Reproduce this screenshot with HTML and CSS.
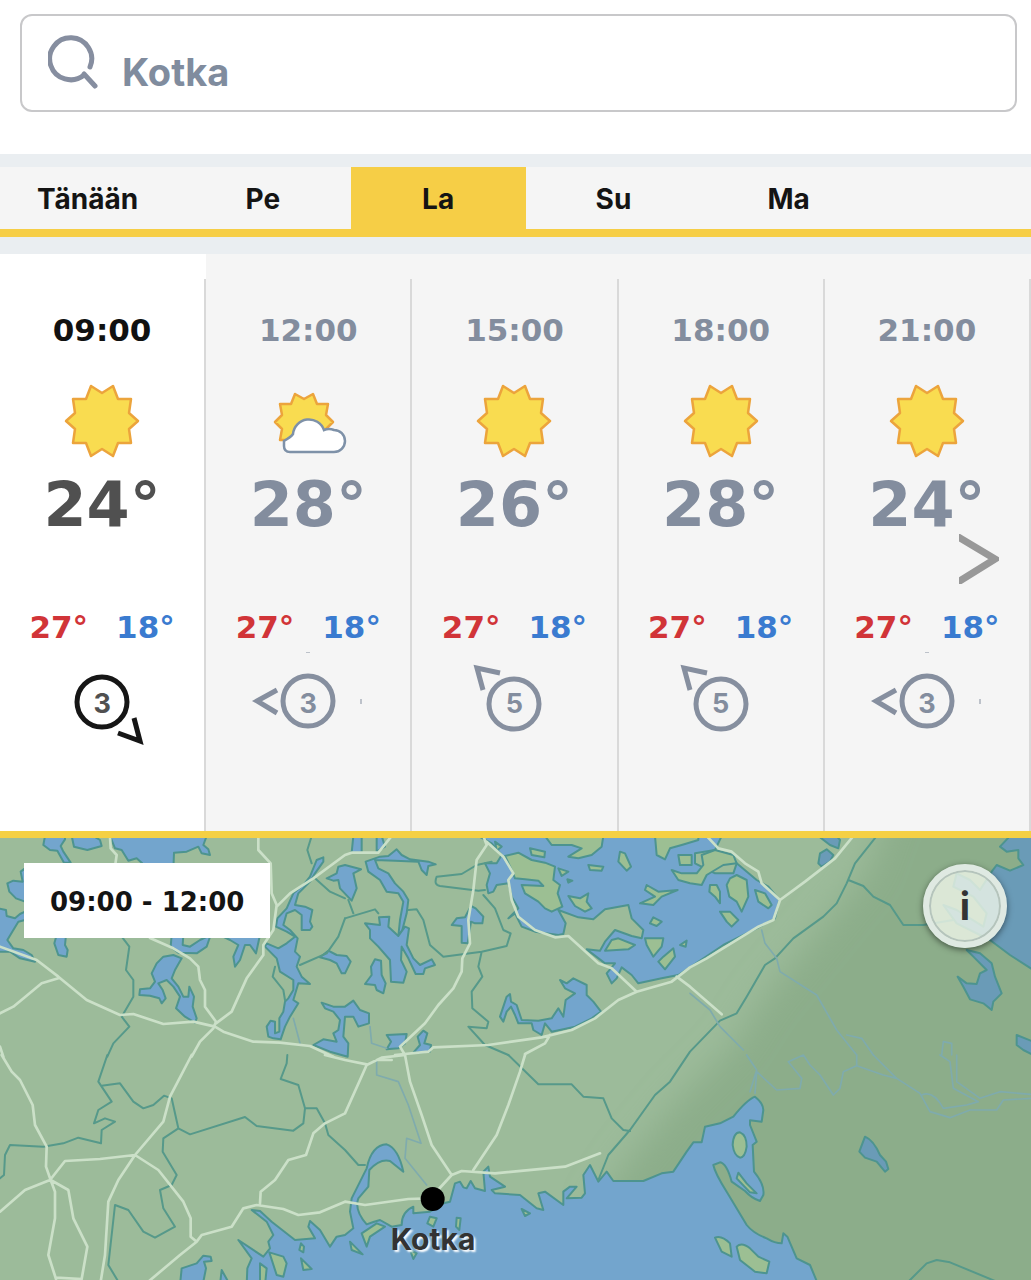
FILE: index.html
```html
<!DOCTYPE html>
<html lang="fi">
<head>
  <meta charset="UTF-8">
  <meta name="viewport" content="width=device-width, initial-scale=1.0">
  <title>Sää - Kotka</title>
  <link rel="stylesheet" href="styles.css">
</head>
<body>
  <!-- Shared symbols -->
  <svg class="defs" width="0" height="0" aria-hidden="true">
    <symbol id="sunny" viewBox="-40 -40 80 80">
      <path class="sun" d="M-11 -35L0 -28L11 -35L16 -22L29 -22L27 -8L36 0L27 8L29 22L16 22L11 35L0 28L-11 35L-16 22L-29 22L-27 8L-36 0L-27 -8L-29 -22L-16 -22Z"/>
    </symbol>
    <symbol id="partly" viewBox="-40 -40 80 80">
      <path class="sun" d="M-13 -27L-4 -22L5 -27L9 -17L20 -17L18 -6L25 1L18 8L20 19L9 19L5 29L-4 23L-13 29L-17 19L-28 19L-26 8L-33 1L-26 -6L-28 -17L-17 -17Z"/>
      <path class="cloud" d="M-18 31H26A11 11 0 0 0 26 9Q21 7 16 9A16 16 0 0 0 -15 13Q-17 16 -24 20V25Q-24 31 -18 31Z"/>
    </symbol>
    <symbol id="wind-se" viewBox="-60 -50 120 100">
      <circle r="25" /><path d="M32 16L38 39L16 31"/>
    </symbol>
    <symbol id="wind-w" viewBox="-60 -50 120 100">
      <circle cy="-1" r="25"/><path d="M-31 -12L-51 -1L-31 11"/>
      <path class="tick" d="M-2 -50H2M53 -3V2"/>
    </symbol>
    <symbol id="wind-nw" viewBox="-60 -50 120 100">
      <circle cy="2" r="25"/><path d="M-31 -12L-37 -34L-14 -29"/>
    </symbol>
  </svg>

  <form class="search">
    <label class="search-box">
      <svg class="search-icon" viewBox="2 2 52 56" aria-hidden="true"><path d="M44 34A21 21 0 1 0 38 42M38 41L49 53"/></svg>
      <input type="search" placeholder="Kotka" aria-label="Paikkakunta">
    </label>
  </form>

  <nav class="days">
    <a href="#tanaan">Tänään</a>
    <a href="#pe">Pe</a>
    <a href="#la" class="active">La</a>
    <a href="#su">Su</a>
    <a href="#ma">Ma</a>
  </nav>

  <section class="forecast">
    <div class="hour current">
      <div class="hour-inner">
        <time>09:00</time>
        <svg class="weather"><use href="#sunny"/></svg>
        <div class="temp">24°</div>
        <div class="range"><span class="high">27°</span><span class="low">18°</span></div>
        <div class="wind"><svg><use href="#wind-se"/></svg><span>3</span></div>
      </div>
    </div>
    <div class="hour">
      <div class="hour-inner">
        <time>12:00</time>
        <svg class="weather"><use href="#partly"/></svg>
        <div class="temp">28°</div>
        <div class="range"><span class="high">27°</span><span class="low">18°</span></div>
        <div class="wind"><svg><use href="#wind-w"/></svg><span>3</span></div>
      </div>
    </div>
    <div class="hour">
      <div class="hour-inner">
        <time>15:00</time>
        <svg class="weather"><use href="#sunny"/></svg>
        <div class="temp">26°</div>
        <div class="range"><span class="high">27°</span><span class="low">18°</span></div>
        <div class="wind"><svg><use href="#wind-nw"/></svg><span>5</span></div>
      </div>
    </div>
    <div class="hour">
      <div class="hour-inner">
        <time>18:00</time>
        <svg class="weather"><use href="#sunny"/></svg>
        <div class="temp">28°</div>
        <div class="range"><span class="high">27°</span><span class="low">18°</span></div>
        <div class="wind"><svg><use href="#wind-nw"/></svg><span>5</span></div>
      </div>
    </div>
    <div class="hour">
      <div class="hour-inner">
        <time>21:00</time>
        <svg class="weather"><use href="#sunny"/></svg>
        <div class="temp">24°</div>
        <div class="range"><span class="high">27°</span><span class="low">18°</span></div>
        <div class="wind"><svg><use href="#wind-w"/></svg><span>3</span></div>
      </div>
    </div>
    <button class="next" type="button" aria-label="Seuraava">
      <svg viewBox="0 0 40 50"><path d="M-4 1L36 25L-4 50"/></svg>
    </button>
  </section>

  <section class="map">
    <svg class="map-image" viewBox="0 0 3093 1326" preserveAspectRatio="xMidYMid slice" aria-hidden="true">
      <defs>
        <filter id="soft" x="-20%" y="-20%" width="140%" height="140%"><feGaussianBlur stdDeviation="50"/></filter>
      </defs>
      <rect class="land" width="3093" height="1326"/>
      <path class="shade" filter="url(#soft)" d="M2690 -150L2600 100L2420 320L2290 480L2200 620L2040 780L1890 960L1780 1120L2300 1500H3400V-150Z"/>

      <!-- Sea -->
      <g transform="translate(0 651)">
        <path class="water" d="M540 690L545 640L590 625L610 602L632 605L635 618L612 620L618 640L608 690ZM660 690L665 645L690 690ZM740 690L742 640L755 610L715 555L790 605L810 580L805 560L820 540L800 500L755 465L780 468L815 500L885 555L945 550L925 515L930 498L960 525L990 575L1010 545L1035 540L1060 520L1050 470L1055 430L1100 340Q1115 270 1160 268Q1195 280 1210 350L1170 318Q1140 310 1108 345L1105 395L1075 430Q1062 465 1100 508Q1120 500 1140 495L1175 515L1205 510Q1205 470 1240 455V475L1290 470L1330 445L1350 440L1365 385L1380 380L1390 397L1400 400L1412 378L1425 400L1455 408L1450 350L1465 335L1470 365L1515 395L1475 405L1485 415L1560 420L1610 460L1630 465L1615 415L1635 410L1690 450V410L1710 395L1730 395L1700 430L1745 428L1755 415L1750 360L1770 330L1795 380L1820 350L1840 378L1930 378L1985 355L2020 350L2060 290L2080 262L2105 262L2115 215L2160 205L2200 185Q2240 135 2265 125Q2290 145 2290 165L2285 200L2250 196L2250 210L2270 260L2258 270L2262 350Q2295 390 2290 420L2280 438Q2255 430 2235 408L2195 380Q2180 325 2160 322L2140 330Q2145 355 2180 410L2240 510Q2260 535 2300 550Q2325 565 2345 565L2350 535L2362 545L2390 610L2430 630L2455 690Z"/>
        <path class="island" d="M903 565L912 575L910 592L898 585ZM903 610L935 642L910 645ZM808 592L850 605L860 625L850 665L830 660ZM780 625L800 640L795 690H780ZM1290 485L1310 490L1300 515L1282 505ZM1370 488L1382 490L1378 525L1368 515ZM1085 535L1130 505L1155 515L1110 545L1100 575ZM1565 462L1590 475L1575 483ZM1050 560L1088 598L1055 585ZM1230 585L1250 595L1240 612ZM2198 270Q2200 232 2220 232Q2240 240 2240 275Q2235 308 2220 308Q2202 302 2198 270ZM2215 353L2240 385L2270 415L2250 412L2210 370ZM2145 548Q2165 540 2190 565L2195 605L2165 590ZM2210 575Q2225 560 2250 580L2275 605L2308 620L2300 655L2265 650L2220 615Z"/>
        <path class="water dim" d="M2595 245Q2620 255 2640 300L2658 320L2665 342L2655 350L2630 320L2595 308L2578 290Z"/>
      </g>

      <!-- Lakes -->
      <g class="water" transform="translate(0 -24)">
        <path d="M135 18L130 45L150 60L172 62L192 98L212 98L190 65L182 48L195 28V18ZM215 18L222 50L262 60L305 48L300 30L280 18ZM330 18L345 55L365 60L385 92L410 85L425 98L440 120H520L522 68L560 65L595 50L605 70L630 75L625 58L610 45L620 18Z"/>
        <path d="M75 115L62 125L68 155L40 152L22 160L28 185L48 205L75 215ZM75 245L60 252L45 265L20 258L18 240L-5 235V365L30 365L60 385L105 395L95 375L70 360L40 355L22 330L40 300L55 275L75 270ZM170 315L163 340L175 375L200 380L203 360L195 345L198 315Z"/>
        <path d="M515 315L512 350L535 368L590 370L620 350L632 315L600 330L570 350L548 345L550 315ZM490 380L470 400L455 430L465 455L450 475L420 478L418 495L450 497L478 505L485 520L497 505L488 480L475 460L500 450L520 470L540 500L528 535L555 560L585 578L590 565L578 530L582 500L568 470L565 500L550 500L535 470L515 445L525 420L545 385L520 375ZM660 315L690 330L715 345L700 380L705 410L720 390L735 345L750 345L768 370L780 315Z"/>
        <path d="M970 82L950 90L930 140L910 165L880 190L860 235L832 265L828 290L860 305L885 320L860 340L835 355L800 340L795 350L830 385L840 425L880 450L880 480L865 505L855 515L850 545L838 565V605L825 610V575L812 572L800 590L805 620L820 625L842 628L855 590L870 560L895 520L880 510L895 460L930 462L905 440L890 410L900 380L885 365L893 325L870 300L850 285L860 250L885 240L905 255V300L930 300L937 290L930 275L937 240L915 230L885 225L895 190L930 155L945 130L970 95Z"/>
        <path d="M1035 105L1015 110L1010 130L980 145L1000 152L1015 150L1020 175L1055 212L1070 175L1060 130L1083 118ZM960 382L985 362L1010 375L1040 378L1052 395L1035 430L1025 430L1010 400L990 390ZM965 518L1000 530L1035 530L1060 512L1080 540L1107 550V580L1075 590L1060 560L1035 560L1030 620L1045 640L1043 680L990 665L940 645L970 628L1010 635L1000 610L1015 600L1020 570L1000 545L975 535Z"/>
      </g>
      <g class="water" transform="translate(1035 -24)">
        <path d="M25 18L20 68H50V18ZM95 18V65L120 50L110 18ZM105 80L130 78L155 58L170 75L195 88L250 95L272 103L250 108L245 135L230 120L220 95L150 92L90 90L100 115L130 130L150 160L175 185L190 210L185 250L172 300L160 318L165 270L175 215L160 190L125 185L105 150L70 125L62 95Z"/>
        <path d="M60 280L105 285L102 262L133 260L130 290L160 318L180 290L192 295L185 345L205 385L225 405L260 388L270 405L240 415L235 432L212 432L190 385L170 350L168 390L185 425L175 458L138 455L135 390L100 350L75 325L75 300ZM90 388L108 392L110 435L122 460L115 490L95 480L90 465L60 462L80 435L78 410Z"/>
        <path d="M125 615L185 612L180 640L160 655L125 658L138 635ZM235 602L247 610L238 640L258 645L255 665L205 668L225 645L218 620ZM378 228L392 235L415 260L412 280L390 280L378 275L368 340L350 338V288L320 285L335 265L360 262Z"/>
        <path d="M400 18L440 40L470 75L455 100L420 100L435 130L425 165L430 190L445 185L455 165L490 160L500 200L520 235L490 265L510 250L530 290L570 305L640 315L655 312L662 280L640 240L700 262L745 268L780 238L850 225L860 265L895 300L890 325L860 318L810 300L780 335L765 362L725 358L780 400L810 400L785 430L800 460L815 445L830 412L860 435L880 460L950 445L1000 435L1035 412L1135 345L1235 295L1290 265L1303 210L1270 170L1235 150L1175 100L1165 130L1110 130L1050 100L1050 70L1110 60L1130 18Z"/>
        <path d="M645 450L665 460L685 445L725 465L725 495L745 515L768 545L740 565L690 590L620 605L600 580L590 615L565 600L560 580L520 580L510 555L498 530L485 545L475 575L465 560L485 500L495 492L498 515L515 525L530 570L580 572L620 565L640 535L655 560L662 510L690 490L660 475Z"/>
      </g>
      <g class="water dim" transform="translate(2070 -24)">
        <path d="M385 18L420 45L445 55L450 30L440 18ZM385 100L390 70L410 58L430 75L420 95L395 110ZM960 18L930 50L950 65L985 60L985 85L1000 105L960 122L920 105L905 125L870 180L840 150L800 130L790 170L850 200L890 250L880 290L800 240L760 225L800 280L900 330L960 375L1030 420V18Z"/>
        <path d="M830 360L870 370L905 400L915 440L935 490L910 515L905 540L880 520L840 508L820 470L803 440L830 460L860 462L870 430L890 420L850 380ZM980 615L1030 635V675L1000 660L980 645Z"/>
      </g>
      <g class="island" transform="translate(1035 -24)">
        <path d="M480 78L520 68L560 90L600 98L630 110L625 150L645 165L638 190L652 230L620 245L600 235L580 215L540 190L530 165L595 168L580 152L540 148L510 145L500 120ZM600 18L620 45L680 45L710 55L670 80L700 85L740 75L770 50L775 18ZM555 55L600 65L598 82L560 75ZM730 105L775 110L770 122L735 120ZM825 65L840 70L858 110L845 122L820 95ZM640 115L670 125L650 138ZM450 35L470 50L455 62ZM667 148L682 152L670 158Z"/>
        <path d="M670 198L705 205L730 190L725 215L740 235L720 245L690 228ZM905 165L940 185L998 180L950 200L925 225L885 220L930 200L900 180ZM925 262L950 275L935 288L915 280ZM930 18L935 75L960 88L975 55L1010 45L1060 30V18ZM1000 75L1040 75V105L1005 105ZM780 362L800 330L820 325L870 345L850 358ZM900 325L955 325L950 350L925 380L905 345ZM955 380L985 355L990 380L960 418L940 395ZM1005 345L1025 332L1022 350Z"/>
        <path d="M980 120L1010 130L1055 130L1075 105L1070 75L1110 60L1165 75L1175 100L1135 105L1110 120L1085 135L1070 165L1035 160L1000 150ZM1095 165L1115 165L1125 185V220L1110 200L1093 185ZM1155 145L1175 135L1205 150L1210 200L1190 245L1175 215L1153 200L1145 165ZM1125 245L1155 245L1180 270L1160 290L1145 275ZM1230 180L1260 190L1280 225L1270 235L1240 215Z"/>
      </g>

      <!-- Provinces and state border -->
      <g class="border">
        <path transform="translate(0 -24)" d="M935 18L922 60L935 100M945 145L990 185L1035 205M1035 265L1015 320L980 370L900 405M825 410L818 440L850 480L855 510M365 320L388 350L378 420L400 450V500L365 560L388 590L340 640L322 680"/>
        <path transform="translate(1035 -24)" d="M440 95L395 105L350 132L275 140Q265 165 285 168L400 182L420 180M415 195L450 235L475 300L497 310L485 348L410 365L295 380L255 345L235 270L215 238L190 240M100 250L90 238L0 265M25 250L10 210M410 365L400 410L412 440L380 485L382 535L430 575L425 595L370 590L420 645L490 675"/>
        <path transform="translate(2070 -24)" d="M560 18L495 100L470 160L440 220L400 260L310 325L255 385L225 405L170 500L140 550L90 572L0 665L-60 755L-105 795L-180 900L-245 975L-275 1050M475 150L520 168L550 200L600 225L640 285L700 285L790 270"/>
        <path transform="translate(0 651)" d="M322 0L295 80L335 140L295 165L282 205L315 190L345 200L305 225L303 265L235 248L190 265L130 275L30 270L15 300L12 360L0 370M305 92L360 85L400 140L430 160L460 150L492 122L515 130L535 220L570 238L735 186L770 213L880 227L910 205L915 160L895 90L842 72L860 25L862 0M535 220L490 250L488 290L530 360L515 390L480 405L490 460L525 515L465 548L430 530L385 465L345 450L325 630L355 680M915 160L950 160L975 205L985 240L1035 285L1075 330L1095 330M1525 0L1615 88L1715 88L1750 125L1810 130L1835 190L1870 225L1890 228M2725 680L2780 625L2810 615L2850 622L2990 680"/>
      </g>
      <g class="river">
        <path transform="translate(0 -24)" d="M880 565L900 640M1110 590L1115 640L1160 655"/>
        <path transform="translate(2070 -24)" d="M215 300L225 340L260 385L270 425L380 495L440 600L500 675M470 615L515 625L550 675M0 490L60 540L90 590L160 660M755 675L760 635L785 640V675"/>
        <path transform="translate(0 651)" d="M1130 15V60L1195 80L1225 150L1263 265L1220 250L1215 310L1280 390M2240 0L2270 45L2250 110M2270 50L2265 115M2270 50L2330 105L2400 100L2405 70L2365 20L2410 0L2430 30L2460 60L2500 120L2520 100L2530 50L2570 32L2570 0M2570 32L2650 60L2690 70L2760 115L2790 170L2850 188L2910 165L2990 165L3010 135L3093 130M2620 0L2690 70M2765 120Q2800 105 2830 160L2900 150L2935 140L2860 100L2850 20L2820 0M2870 0V80L2940 130L3000 110L3093 118"/>
      </g>

      <!-- Roads -->
      <g class="road">
        <path transform="translate(0 -24)" d="M330 18L332 55L350 75L345 110M775 18V60L812 100L815 190L830 225L820 300L790 345V375L740 445L695 545L648 580M830 230L870 190L940 145L1035 75L1055 68H1135L1175 18M0 350L110 390L175 440L260 510L360 555L400 552L490 582L580 575L645 590L670 605L760 635L840 638L930 648L1000 680M175 445L125 460L40 530L0 550M450 324L520 355L570 385L595 410L600 450L615 480V530L648 575L640 595L600 635L575 680M0 650L10 680"/>
        <path transform="translate(1035 -24)" d="M415 18L425 45L395 90L385 180L370 270L375 340L352 385L350 425L325 475L280 525L240 580L165 650L180 675M425 35L475 80L505 130L490 150L500 210L520 260L570 300L630 322L670 318L760 400L800 415L875 485M150 675L250 665L265 652L430 645L590 622L680 600L750 565L820 510L875 485L980 455L1035 412L1085 385L1240 290L1285 270L1305 210L1250 160L1240 125L1200 100L1160 65L1120 55L1085 18M1305 210L1380 155L1470 85L1525 18M615 615L600 640L540 672M995 440L1035 470L1130 553"/>
        <path transform="translate(0 651)" d="M5 0L35 50L60 75L98 150L105 210L140 275L138 335L152 375L165 410V490L145 600L168 672M575 0L510 125L490 200L405 300L355 375L325 440L315 600L302 680M0 470L75 405L150 375L195 318L300 312L405 300L475 345L550 440L572 490V545L590 560L540 600L445 680M152 375L205 405L220 490L262 575L245 672L168 668M590 560L605 540L695 515L730 460L770 450L850 462L895 480L960 472L1035 440L1095 450L1225 432L1290 430M780 445L782 410L825 375L865 315L918 300L940 235L975 205L1035 175L1080 75L1100 30L1145 8L1215 0M975 0L1035 15L1100 28M1130 15H1175M1215 0L1230 80L1265 180L1295 270L1355 360L1300 420M1575 0L1560 50L1525 150L1490 240L1420 345M1355 360L1385 348L1485 355L1695 335L1800 295"/>
      </g>
    </svg>

    <div class="map-time">09:00 - 12:00</div>
    <button class="info" type="button" aria-label="Tietoja">i</button>
    <div class="pin"><span class="dot"></span>Kotka</div>
  </section>
</body>
</html>
```

FILE: styles.css
```css
* {
  box-sizing: border-box;
}
body {
  margin: 0;
  font-family: Inter, Arial, sans-serif;
  font-weight: 700;
  background-color: #fff;
  color: #141414;
}
.defs {
  position: absolute;
}
.search {
  padding: 14px 14px 42px 20px;
}
.search-box {
  display: flex;
  align-items: center;
  gap: 22px;
  height: 98px;
  padding: 0 26px;
  border: 2px solid #c8c8ca;
  border-radius: 12px;
}
.search-icon {
  width: 52px;
  height: 56px;
  fill: none;
  stroke: #868ea0;
  stroke-width: 5;
  stroke-linecap: round;
}
.search-box input {
  flex: 1;
  min-width: 0;
  padding: 18px 0 0;
  border: 0;
  outline: 0;
  background: none;
  font: inherit;
  font-size: 38px;
  color: #808c9e;
}
.search-box input::placeholder {
  color: #808c9e;
  opacity: 1;
}

.days {
  display: flex;
  border-top: 13px solid #eaeef1;
  border-bottom: 8px solid #f6ce46;
  background-color: #f5f5f5;
}
.days a {
  width: 17%;
  padding-top: 2px;
  font-size: 28px;
  line-height: 60px;
  text-align: center;
  text-decoration: none;
  color: #141414;
}
.days .active {
  background-color: #f6ce46;
}

.forecast {
  position: relative;
  display: grid;
  grid-template-columns: repeat(5, 1fr);
  border-top: 17px solid #eaeef1;
  border-bottom: 7px solid #f5d044;
  background-color: #f5f5f5;
}
.hour {
  padding-top: 25px;
  color: #838d9e;
}
.hour-inner {
  display: flex;
  flex-direction: column;
  align-items: center;
  height: 552px;
  padding-top: 31px;
  border-right: 2px solid #d9d9d9;
}
.current {
  background-color: #fff;
  color: #505050;
}
.hour time,
.temp,
.range,
.map-time {
  font-family: "DejaVu Sans", Verdana, sans-serif;
}
.hour time {
  font-size: 31px;
  line-height: 40px;
}
.current time {
  color: #111;
}
.weather {
  width: 80px;
  height: 80px;
  margin-top: 31px;
}
.sun {
  fill: #f9dc50;
  stroke: #eca43c;
  stroke-width: 2.5;
  stroke-linejoin: round;
}
.cloud {
  fill: #fff;
  stroke: #7e91a8;
  stroke-width: 2.5;
}
.temp {
  margin-top: 8px;
  font-size: 62px;
  line-height: 72px;
}
.range {
  display: flex;
  gap: 28px;
  margin-top: 66px;
  font-size: 31px;
  line-height: 40px;
}
.high {
  color: #d13438;
}
.low {
  color: #3a7bd0;
}
.wind {
  display: grid;
  place-items: center;
  margin-top: 5px;
  font-size: 27px;
  line-height: 30px;
}
.wind > * {
  grid-area: 1 / 1;
}
.wind span {
  padding-top: 4px;
}
.wind svg {
  width: 120px;
  height: 100px;
  fill: none;
  stroke: #868f9f;
  stroke-width: 5;
}
.current .wind svg {
  stroke: #161616;
}
.tick {
  stroke-width: 2;
  opacity: 0.5;
}
.next {
  position: absolute;
  top: 280px;
  right: 32px;
  padding: 0;
  border: 0;
  background: none;
  cursor: pointer;
}
.next svg {
  display: block;
  width: 40px;
  height: 50px;
  fill: none;
  stroke: #989898;
  stroke-width: 7;
}

.map {
  position: relative;
  aspect-ratio: 1031 / 442;
  overflow: hidden;
}
.map-image {
  display: block;
  width: 100%;
  height: 100%;
}
.land {
  fill: #9cbb9a;
}
.shade {
  fill: #8cad8a;
}
.water {
  fill: #73a5cd;
  stroke: #4d948f;
  stroke-width: 6;
  stroke-linejoin: round;
}
.dim {
  fill: #6a9bb7;
}
.island {
  fill: #9cbf93;
  stroke: #4d948f;
  stroke-width: 6;
  stroke-linejoin: round;
}
.border,
.river,
.road {
  fill: none;
  stroke-linejoin: round;
  stroke-linecap: round;
}
.border {
  stroke: #56998a;
  stroke-width: 6;
}
.river {
  stroke: #7fabad;
  stroke-width: 5;
}
.road {
  stroke: #cbe0c8;
  stroke-width: 8;
}
.map-time {
  position: absolute;
  top: 25px;
  left: 24px;
  padding: 4px 26px 0;
  background-color: #fff;
  font-size: 26px;
  line-height: 71px;
}
.info {
  position: absolute;
  top: 26px;
  right: 24px;
  width: 84px;
  height: 84px;
  border: 6px solid #dfe9e2;
  border-radius: 50%;
  padding: 0;
  background-color: rgba(239, 245, 232, 0.8);
  box-shadow: 0 2px 6px rgba(0, 0, 0, 0.5), inset 0 0 0 2px #b5c4bc;
  font: inherit;
  font-size: 38px;
  color: #333;
}
.pin {
  position: absolute;
  left: 42%;
  top: 349px;
  display: flex;
  flex-direction: column;
  align-items: center;
  gap: 10px;
  transform: translateX(-50%);
  font-size: 30px;
  line-height: 36px;
  color: #333;
  text-shadow: 2px 2px 2px #fff;
}
.dot {
  width: 24px;
  height: 24px;
  border-radius: 50%;
  background-color: #000;
}
```
